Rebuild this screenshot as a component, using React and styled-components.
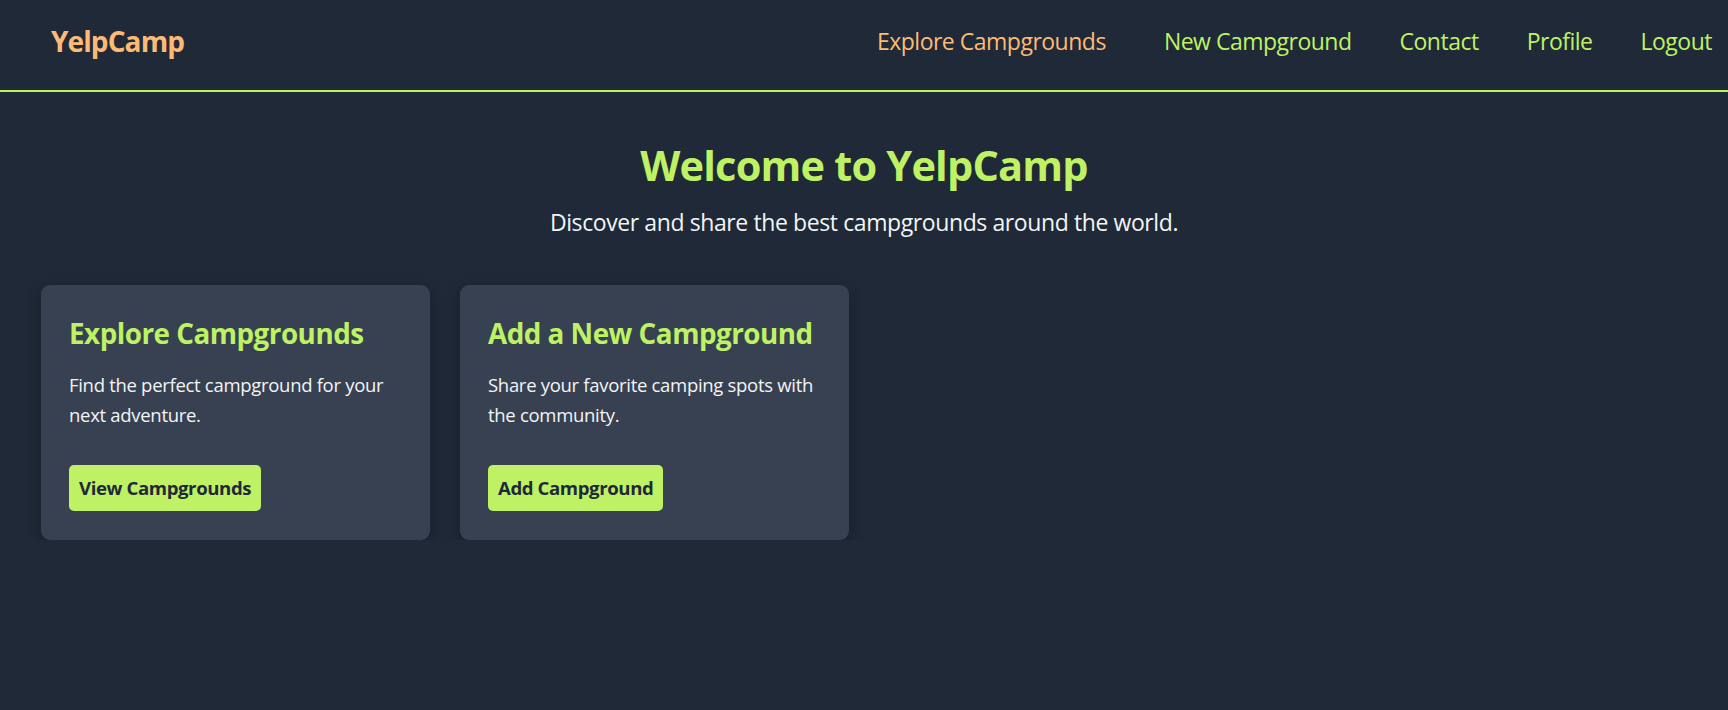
import * as React from 'react';
import styled, {createGlobalStyle} from 'styled-components';

const lime = '#bef264';
const orange = '#fdba74';

const GlobalStyle = createGlobalStyle`
  body {
    margin: 0;
    background: #1f2937;
    font-family: "Open Sans", "Noto Sans", sans-serif;
  }
`;

const Header = styled.header`
  display: flex;
  align-items: center;
  justify-content: space-between;
  height: 92px;
  box-sizing: border-box;
  padding: 0 16px 8px 51px;
  border-bottom: 2px solid ${lime};
  background: #1f2937;
`;

const Logo = styled.a`
  font-size: 28px;
  font-weight: 700;
  color: ${orange};
  text-decoration: none;
  letter-spacing: -0.9px;
`;

const Nav = styled.nav`
  display: flex;
  align-items: center;
  gap: 48px;
`;

const NavLink = styled.a`
  font-size: 23px;
  letter-spacing: -0.5px;
  color: ${({$active}) => ($active ? orange : lime)};
  text-decoration: none;
  margin-right: ${({$active}) => ($active ? '10px' : '0')};
`;

const Main = styled.main`
  padding: 48px 0 0;
`;

const Hero = styled.section`
  text-align: center;
`;

const Title = styled.h1`
  margin: 0;
  font-size: 41.5px;
  line-height: 50px;
  font-weight: 700;
  letter-spacing: -0.8px;
  color: ${lime};
`;

const Subtitle = styled.p`
  margin: 15px 0 0;
  font-size: 23px;
  line-height: 35px;
  letter-spacing: -0.4px;
  color: #f3f4f6;
`;

const Cards = styled.div`
  display: flex;
  gap: 30px;
  padding: 45px 41px 0;
`;

const Card = styled.div`
  width: 389px;
  box-sizing: border-box;
  padding: 28px 28px 29px;
  background: #374151;
  border-radius: 9px;
  box-shadow: 0 6px 14px rgba(0, 0, 0, 0.25);
`;

const CardTitle = styled.h2`
  margin: 0;
  font-size: 27.8px;
  line-height: 40px;
  font-weight: 700;
  letter-spacing: -0.5px;
  color: ${lime};
`;

const CardText = styled.p`
  margin: 17px 0 35px;
  font-size: 18.5px;
  line-height: 30px;
  letter-spacing: -0.3px;
  color: #f3f4f6;
`;

const Button = styled.a`
  display: inline-block;
  padding: 8px 10px;
  font-size: 18.6px;
  line-height: 30px;
  font-weight: 700;
  letter-spacing: -0.4px;
  color: #1f2937;
  background: ${lime};
  border-radius: 5px;
  text-decoration: none;
`;

const cards = [
    {title: 'Explore Campgrounds', text: 'Find the perfect campground for your next adventure.', action: 'View Campgrounds'},
    {title: 'Add a New Campground', text: 'Share your favorite camping spots with the community.', action: 'Add Campground'},
];

const App = () => (
    <>
        <GlobalStyle/>
        <Header>
            <Logo href="#">YelpCamp</Logo>
            <Nav>
                <NavLink href="#" $active>Explore Campgrounds</NavLink>
                <NavLink href="#">New Campground</NavLink>
                <NavLink href="#">Contact</NavLink>
                <NavLink href="#">Profile</NavLink>
                <NavLink href="#">Logout</NavLink>
            </Nav>
        </Header>
        <Main>
            <Hero>
                <Title>Welcome to YelpCamp</Title>
                <Subtitle>Discover and share the best campgrounds around the world.</Subtitle>
            </Hero>
            <Cards>
                {cards.map(card => (
                    <Card key={card.title}>
                        <CardTitle>{card.title}</CardTitle>
                        <CardText>{card.text}</CardText>
                        <Button href="#">{card.action}</Button>
                    </Card>
                ))}
            </Cards>
        </Main>
    </>
);

export default App;
